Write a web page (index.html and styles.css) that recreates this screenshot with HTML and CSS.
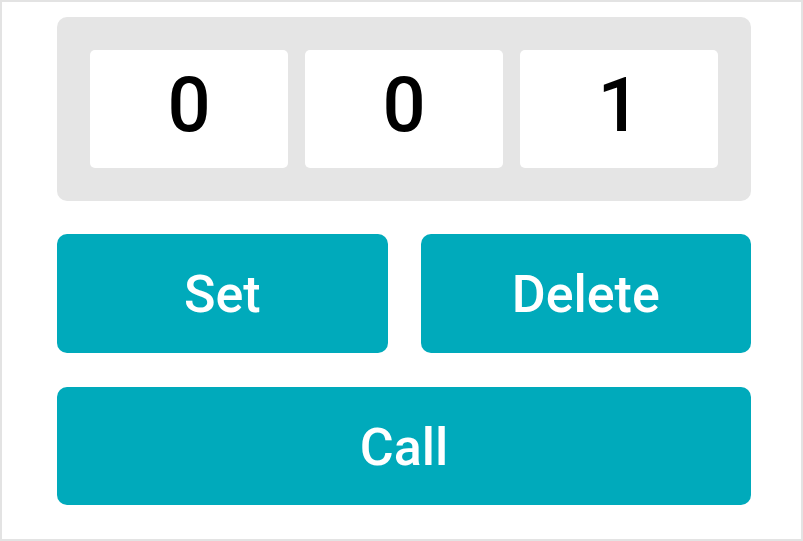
FILE: index.html
```html
<!DOCTYPE html>
<html lang="en">
<head>
    <meta charset="UTF-8">
    <title>Dialer</title>
    <link rel="stylesheet" href="styles.css">
</head>
<body>
    <div class="frame">
        <div class="dial">
            <div class="digit">0</div>
            <div class="digit">0</div>
            <div class="digit">1</div>
        </div>

        <div class="actions">
            <button class="btn">Set</button>
            <button class="btn">Delete</button>
        </div>
        <button class="btn btn-wide">Call</button>
    </div>
</body>
</html>
```

FILE: styles.css
```css
:root {
    --teal: #00aabb;
    --panel: #e5e5e5;
}

* {
    box-sizing: border-box;
}

body {
    margin: 0;
    font-family: Roboto, "Noto Sans", sans-serif;
    background: #fff;
}

/* outer frame */
.frame {
    width: 803px;
    height: 541px;
    border: 2px solid #e3e3e3;
    padding: 15px 50px 0 55px;
}

/* digit panel */
.dial {
    width: 694px;
    background: var(--panel);
    border-radius: 10px;
    padding: 33px;
    display: grid;
    grid-template-columns: repeat(3, 1fr);
    gap: 17px;
}

.digit {
    height: 118px;
    background: #fff;
    border-radius: 5px;
    display: flex;
    align-items: center;
    justify-content: center;
    font-size: 76px;
    font-weight: 500;
    color: #000;
    padding-bottom: 8px;
}

/* buttons */
.actions {
    width: 694px;
    margin-top: 33px;
    display: grid;
    grid-template-columns: 1fr 1fr;
    gap: 33px;
}

.btn {
    display: block;
    height: 119px;
    border: none;
    border-radius: 10px;
    background: var(--teal);
    color: #fff;
    font-family: Roboto, "Noto Sans", sans-serif;
    font-size: 52px;
    font-weight: 500;
    padding: 2px 0 0;
}

.btn-wide {
    width: 694px;
    height: 118px;
    margin-top: 34px;
}
```
